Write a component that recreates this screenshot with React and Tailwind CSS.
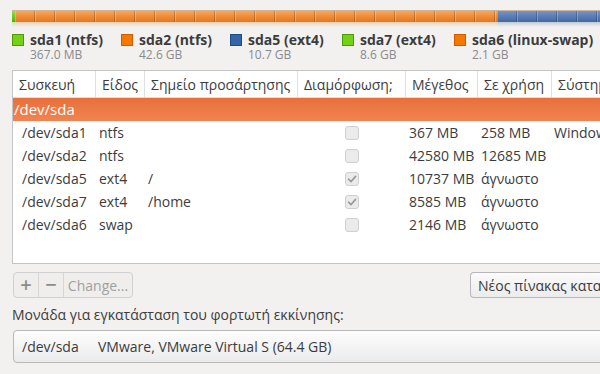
import React from "react";

const legend = [
  { name: "sda1 (ntfs)", size: "367.0 MB", c: "bg-[#73d216] border-[#4e9a06]", x: "w-[109px]" },
  { name: "sda2 (ntfs)", size: "42.6 GB", c: "bg-[#f57900] border-[#ce5c00]", x: "w-[109px]" },
  { name: "sda5 (ext4)", size: "10.7 GB", c: "bg-[#3465a4] border-[#204a87]", x: "w-[112px]" },
  { name: "sda7 (ext4)", size: "8.6 GB", c: "bg-[#73d216] border-[#4e9a06]", x: "w-[112px]" },
  { name: "sda6 (linux-swap)", size: "2.1 GB", c: "bg-[#f57900] border-[#ce5c00]", x: "w-[146px]" },
];

const rows = [
  ["/dev/sda1", "ntfs", "", false, "367 MB", "258 MB", "Windows"],
  ["/dev/sda2", "ntfs", "", false, "42580 MB", "12685 MB", ""],
  ["/dev/sda5", "ext4", "/", true, "10737 MB", "άγνωστο", ""],
  ["/dev/sda7", "ext4", "/home", true, "8585 MB", "άγνωστο", ""],
  ["/dev/sda6", "swap", "", false, "2146 MB", "άγνωστο", ""],
];

const cols = "grid grid-cols-[83px_49px_153px_108px_72px_74px_200px]";

function Cells({ n }) {
  return (
    <div className="flex h-full">
      {Array.from({ length: n }).map((_, i) => (
        <div key={i} className="w-[20px] h-full shrink-0 border-r border-black/20 shadow-[inset_1px_0_0_rgba(255,255,255,0.25)]" />
      ))}
    </div>
  );
}

function Check({ on }) {
  return (
    <div className="w-[14px] h-[14px] rounded-[3px] border border-[#cfcfcf] bg-[#ebebeb] flex items-center justify-center">
      {on && (
        <svg width="10" height="10" viewBox="0 0 10 10">
          <path d="M1.5 5.2 L4 7.6 L8.6 2.4" fill="none" stroke="#9a9a9a" strokeWidth="1.6" strokeLinecap="round" strokeLinejoin="round" />
        </svg>
      )}
    </div>
  );
}

export default function App() {
  return (
    <div className="w-[600px] h-[374px] bg-[#f2f1f0] overflow-hidden text-[#3c3c3c] font-['Open_Sans',sans-serif] text-[14px]">
      {/* partition bar */}
      <div className="pt-[10px] pl-[12px]">
        <div className="flex h-[12px] w-[600px] border-t border-[#a85a10]/40">
          <div className="w-[3px] h-full bg-gradient-to-b from-[#8ee33a] to-[#5aa812]" />
          <div className="w-[504px] h-full overflow-hidden bg-gradient-to-b from-[#f6a75c] via-[#f08c36] to-[#e2781e]">
            <Cells n={26} />
          </div>
          <div className="w-[120px] h-full overflow-hidden bg-gradient-to-b from-[#7595c8] via-[#5a7db5] to-[#45679e]">
            <Cells n={6} />
          </div>
        </div>
        <div className="flex h-[5px] w-[600px] opacity-40">
          <div className="w-[3px] bg-gradient-to-b from-[#8ee33a] to-transparent" />
          <div className="w-[504px] bg-gradient-to-b from-[#e2a060] to-transparent" />
          <div className="w-[120px] bg-gradient-to-b from-[#7a90b8] to-transparent" />
        </div>
      </div>

      {/* legend */}
      <div className="flex pl-[12px] mt-[6px] h-[37px]">
        {legend.map((l) => (
          <div key={l.name} className={`flex shrink-0 ${l.x}`}>
            <div className={`w-[12px] h-[12px] mt-[1px] border ${l.c}`} />
            <div className="ml-[6px] flex flex-col -mt-[1px]">
              <span className="font-bold text-[14px] leading-[16px] whitespace-nowrap">{l.name}</span>
              <span className="text-[12px] text-[#8a8a8a] leading-[14px] whitespace-nowrap">{l.size}</span>
            </div>
          </div>
        ))}
      </div>

      {/* table */}
      <div className="ml-[12px] w-[620px] h-[194px] bg-white border border-[#c4c4c4] border-r-0 overflow-hidden">
        <div className={`${cols} h-[27px] border-b border-[#dcdcdc]`}>
          {["Συσκευή", "Είδος", "Σημείο προσάρτησης", "Διαμόρφωση;", "Μέγεθος", "Σε χρήση", "Σύστημα"].map((h, i) => (
            <div key={h} className={`flex items-center pl-[6px] ${i < 6 ? "border-r border-[#e0e0e0]" : ""} whitespace-nowrap overflow-hidden`}>
              {h}
            </div>
          ))}
        </div>
        <div className="h-[23px] flex items-center pl-[1px] text-white text-[15px] bg-gradient-to-b from-[#e8703c] to-[#f2834f]">
          /dev/sda
        </div>
        {rows.map((r) => (
          <div key={r[0]} className={`${cols} h-[23px] items-center whitespace-nowrap`}>
            <div className="pl-[9px]">{r[0]}</div>
            <div className="pl-[3px]">{r[1]}</div>
            <div className="pl-[3px]">{r[2]}</div>
            <div className="pl-[47px]"><Check on={r[3]} /></div>
            <div className="pl-[3px]">{r[4]}</div>
            <div className="pl-[3px]">{r[5]}</div>
            <div className="pl-[2px] overflow-hidden">{r[6]}</div>
          </div>
        ))}
      </div>

      {/* buttons */}
      <div className="flex mt-[8px] pl-[13px] h-[26px]">
        <div className="flex border border-[#d0d0d0] rounded-[4px] text-[#a0a0a0] bg-[#efeeed]">
          <div className="w-[25px] flex items-center justify-center border-r border-[#d6d6d6] text-[20px] font-semibold text-[#8c8c8c]">+</div>
          <div className="w-[25px] flex items-center justify-center border-r border-[#d6d6d6] text-[20px] font-semibold text-[#8c8c8c]">−</div>
          <div className="w-[68px] flex items-center justify-center text-[14px]">Change...</div>
        </div>
        <div className="ml-[337px] w-[140px] flex items-center pl-[7px] border border-[#b8b8b8] border-r-0 rounded-l-[4px] bg-gradient-to-b from-[#fbfbfb] to-[#ececec] whitespace-nowrap overflow-hidden">
          Νέος πίνακας κατα
        </div>
      </div>

      <div className="pl-[12px] mt-[7px] h-[20px] leading-[20px] whitespace-nowrap">
        Μονάδα για εγκατάσταση του φορτωτή εκκίνησης:
      </div>

      <div className="ml-[13px] mt-[5px] w-[620px] h-[33px] flex items-center border border-[#b9b9b9] rounded-[4px] bg-gradient-to-b from-[#fdfdfd] to-[#ebebeb] whitespace-nowrap">
        <span className="pl-[8px] w-[84px]">/dev/sda</span>
        <span>VMware, VMware Virtual S (64.4 GB)</span>
      </div>
    </div>
  );
}
